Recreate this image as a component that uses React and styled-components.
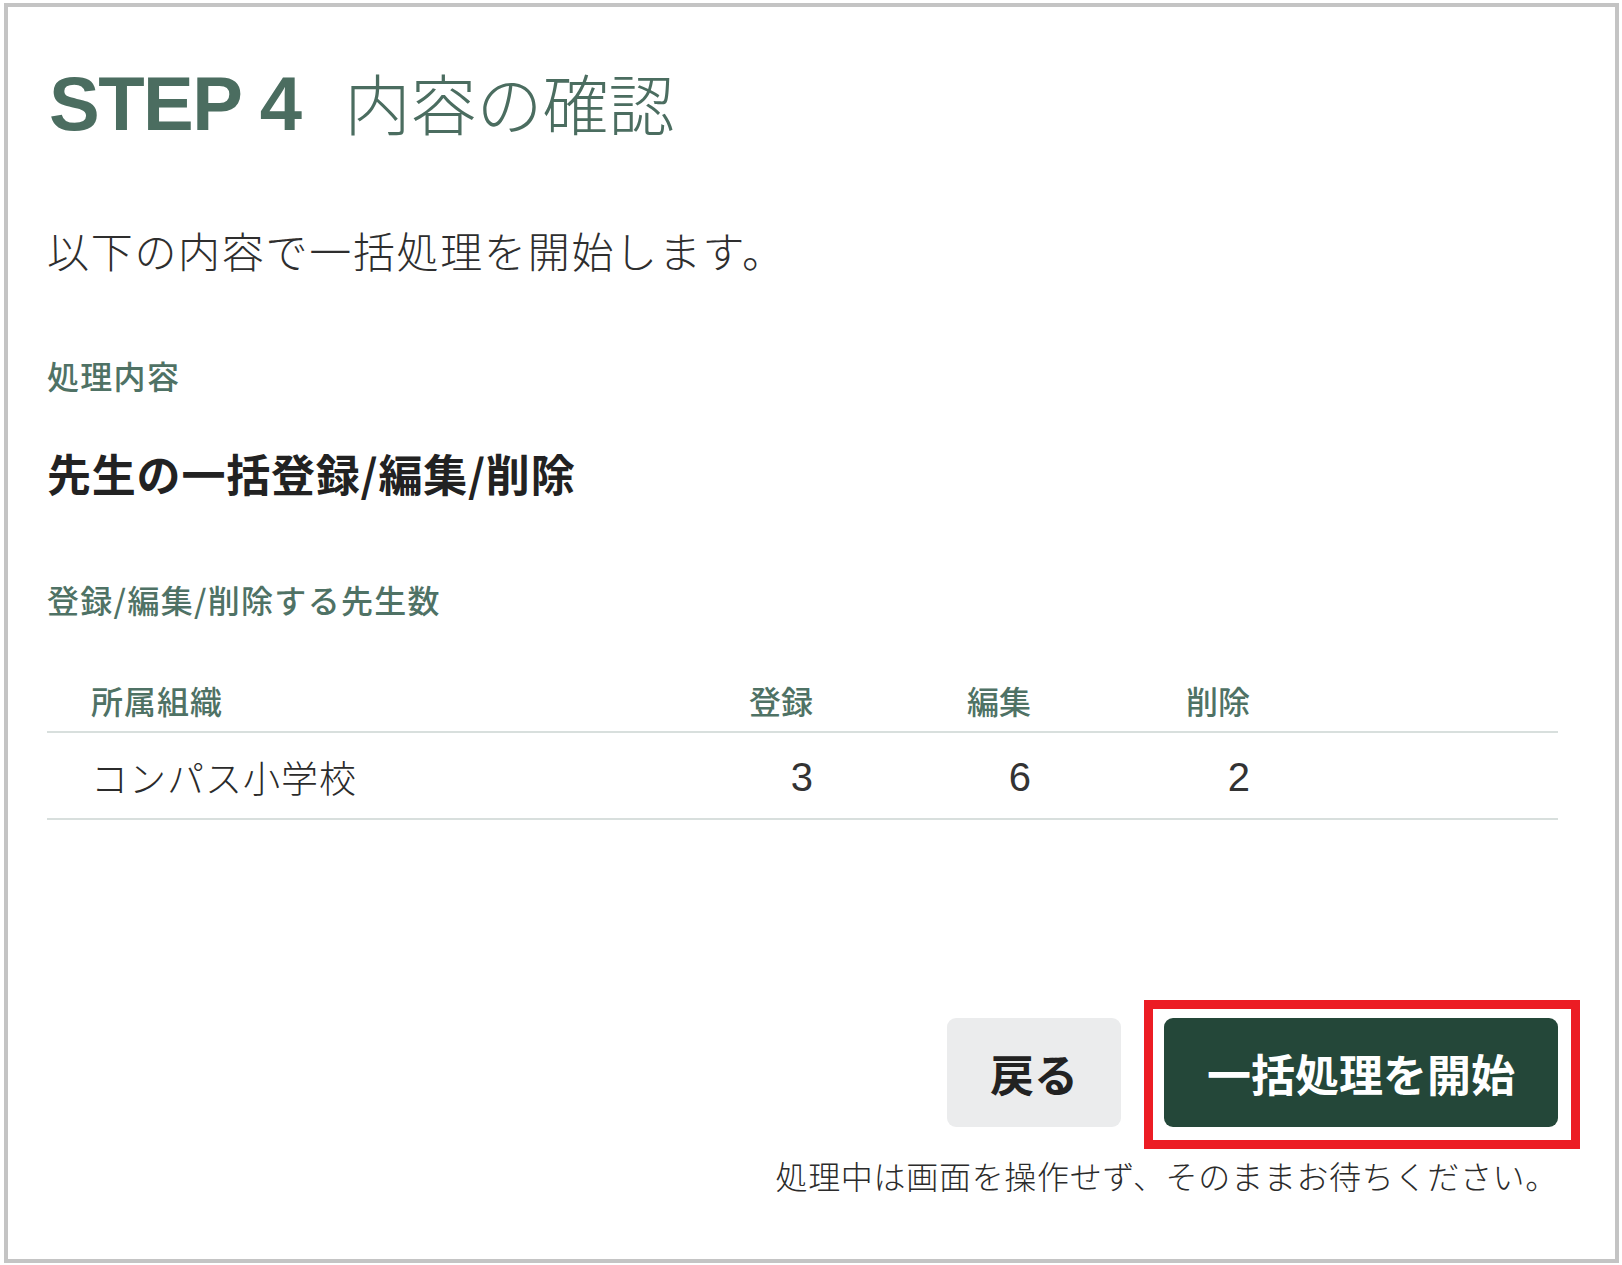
import React from 'react';
import styled, { createGlobalStyle } from 'styled-components';

const GlobalStyle = createGlobalStyle`
  html, body {
    margin: 0;
    padding: 0;
    background: #ffffff;
  }
  body {
    font-family: "Noto Sans CJK JP", "Noto Sans", sans-serif;
    color: #2b2b2b;
  }
  * { box-sizing: border-box; }
`;

const Page = styled.div`
  width: 1622px;
  height: 1265px;
  padding: 3px 3px 2px 4px;
`;

const Frame = styled.div`
  height: 100%;
  border: 4px solid #c4c4c4;
  background: #fff;
  padding: 59px 57px 0 39px;
  display: flex;
  flex-direction: column;
`;

const Title = styled.h1`
  margin: 0;
  display: flex;
  align-items: baseline;
  color: #4b6d60;
  line-height: 1;
`;

const StepNo = styled.span`
  font-family: "Liberation Sans", Arial, sans-serif;
  font-weight: 700;
  font-size: 76px;
  letter-spacing: -1.5px;
  margin-left: 2px;
`;

const StepName = styled.span`
  font-family: "Noto Sans CJK JP", sans-serif;
  font-weight: 300;
  font-size: 66px;
  margin-left: 44px;
`;

const Intro = styled.p`
  margin: 78px 0 0;
  font-size: 42px;
  line-height: 60px;
  font-weight: 300;
  letter-spacing: 1.7px;
  color: #2e2e2e;
`;

const Label = styled.div`
  margin-top: ${p => p.$gap}px;
  font-size: 32px;
  line-height: 44px;
  font-weight: 500;
  letter-spacing: 1.3px;
  color: #4f7265;
`;

const Value = styled.div`
  margin-top: 46px;
  font-size: 44px;
  line-height: 60px;
  font-weight: 700;
  letter-spacing: 0.8px;
  color: #222;
`;

const Table = styled.div`
  margin-top: 57px;
  display: flex;
  flex-direction: column;
`;

const Row = styled.div`
  display: grid;
  grid-template-columns: 566px 200px 218px 219px 1fr;
  align-items: center;
  border-bottom: 2px solid #d8dfdd;
  height: ${p => p.$h}px;
  padding-bottom: ${p => p.$pb || 0}px;
`;

const HeadCell = styled.div`
  font-size: 32px;
  line-height: 44px;
  font-weight: 500;
  color: #4f7265;
  text-align: ${p => (p.$num ? 'right' : 'left')};
  letter-spacing: ${p => (p.$num ? 0 : 1)}px;
  padding-left: ${p => (p.$num ? 0 : 44)}px;
`;

const OrgCell = styled.div`
  font-size: 37px;
  line-height: 50px;
  font-weight: 300;
  letter-spacing: 1px;
  color: #2b2b2b;
  padding-left: 44px;
  padding-top: 3px;
`;

const NumCell = styled.div`
  font-family: "Liberation Sans", Arial, sans-serif;
  font-size: 40px;
  line-height: 50px;
  font-weight: 400;
  color: #333;
  text-align: right;
  padding-top: 3px;
`;

const Actions = styled.div`
  margin-top: 198px;
  display: flex;
  justify-content: flex-end;
  gap: 43px;
`;

const Button = styled.button`
  height: 109px;
  padding: 0 43px;
  border: none;
  border-radius: 9px;
  font-family: "Noto Sans CJK JP", sans-serif;
  font-size: 44px;
  font-weight: 700;
  line-height: 1;
  cursor: pointer;
  background: ${p => (p.$primary ? '#244739' : '#ebeced')};
  color: ${p => (p.$primary ? '#ffffff' : '#222222')};
`;

const Highlight = styled.div`
  position: relative;
`;

const RedBox = styled.div`
  position: absolute;
  top: -18px;
  left: -20px;
  right: -22px;
  bottom: -22px;
  border: 9px solid #ec1c24;
  pointer-events: none;
`;

const Note = styled.p`
  margin: 26px 0 0;
  text-align: right;
  font-size: 32px;
  line-height: 44px;
  font-weight: 300;
  letter-spacing: 0.7px;
  color: #2b2b2b;
`;

const counts = [
  { org: 'コンパス小学校', add: 3, edit: 6, del: 2 },
];

export default function App() {
  return (
    <>
      <GlobalStyle />
      <Page>
        <Frame>
          <Title>
            <StepNo>STEP 4</StepNo>
            <StepName>内容の確認</StepName>
          </Title>

          <Intro>以下の内容で一括処理を開始します。</Intro>

          <Label $gap={73}>処理内容</Label>
          <Value>先生の一括登録/編集/削除</Value>

          <Label $gap={74}>登録/編集/削除する先生数</Label>

          <Table>
            <Row $h={55} $pb={9}>
              <HeadCell>所属組織</HeadCell>
              <HeadCell $num>登録</HeadCell>
              <HeadCell $num>編集</HeadCell>
              <HeadCell $num>削除</HeadCell>
              <div />
            </Row>
            {counts.map(c => (
              <Row key={c.org} $h={87}>
                <OrgCell>{c.org}</OrgCell>
                <NumCell>{c.add}</NumCell>
                <NumCell>{c.edit}</NumCell>
                <NumCell>{c.del}</NumCell>
                <div />
              </Row>
            ))}
          </Table>

          <Actions>
            <Button>戻る</Button>
            <Highlight>
              <Button $primary>一括処理を開始</Button>
              <RedBox />
            </Highlight>
          </Actions>

          <Note>処理中は画面を操作せず、そのままお待ちください。</Note>
        </Frame>
      </Page>
    </>
  );
}
